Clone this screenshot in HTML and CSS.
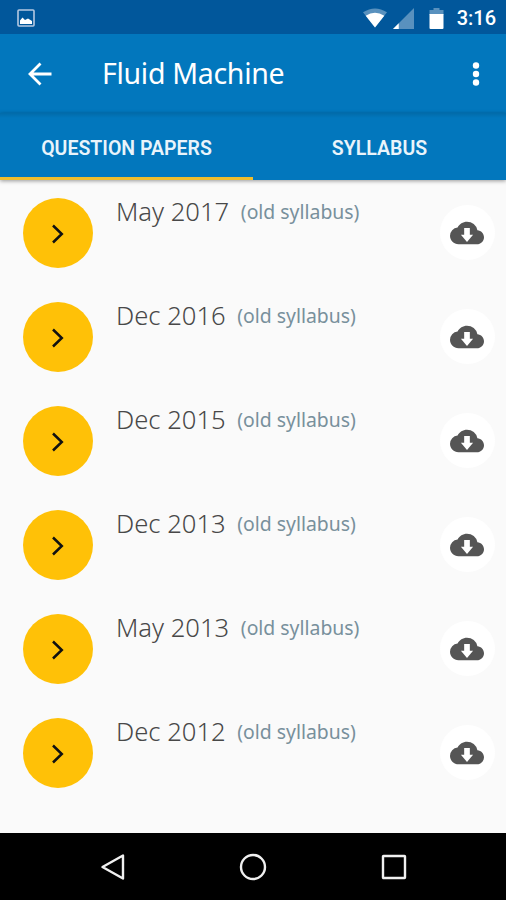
FILE: index.html
```html
<!DOCTYPE html>
<html lang="en">
<head>
    <meta charset="UTF-8">
    <meta name="viewport" content="width=device-width, initial-scale=1.0">
    <title>Fluid Machine</title>
    <link rel="stylesheet" href="styles.css">
</head>
<body>
    <!-- Shared icons -->
    <svg class="sprite" aria-hidden="true">
        <symbol id="chevron" viewBox="0 0 12 20">
            <path d="M1 1.500 9.800 10 1 18.500"/>
        </symbol>
        <symbol id="cloud" viewBox="0 0 24 24">
            <path d="M19.35 10.04A7.49 7.49 0 0 0 12 4C9.11 4 6.6 5.64 5.35 8.04A5.994 5.994 0 0 0 0 14c0 3.31 2.69 6 6 6h13c2.76 0 5-2.24 5-5 0-2.64-2.05-4.78-4.65-4.96zM16.3 13.3L12 18.3l-4.300-5H10V8.500h4V13.300z"/>
        </symbol>
    </svg>

    <div class="status-bar">
        <svg class="picture-icon" viewBox="0 0 18 18">
            <rect x="1" y="1" width="16" height="16" rx="1"/>
            <path d="M3 15V11.500l2.500-3L8 11l3-1.500 4 2.500v3z"/>
        </svg>
        <svg class="wifi-icon" viewBox="0 0 24 20">
            <path class="faded" d="M0 4.2Q12-3.4 24 4.2L12 19.5z"/>
            <path d="M2.7 7.7Q12 1.9 21.3 7.7L12 19.5z"/>
        </svg>
        <svg class="signal-icon" viewBox="0 0 22 22">
            <path class="faded" d="M0 22 22 0v22z"/>
            <path d="M0 22 6 16v6z"/>
        </svg>
        <svg class="battery-icon" viewBox="0 0 14 21">
            <path class="faded" d="M4 0h6v2h4v5H0V2h4z"/>
            <path d="M0 6h14v14a1 1 0 0 1-1 1H1a1 1 0 0 1-1-1z"/>
        </svg>
        <span class="clock">3:16</span>
    </div>

    <header class="toolbar">
        <svg class="back-icon" viewBox="0 0 24 24">
            <path d="M23.500 12H2.500M12.500 1.500 2 12l10.500 10.500"/>
        </svg>
        <h1>Fluid Machine</h1>
        <svg class="menu-icon" viewBox="0 0 8 24">
            <circle cx="4" cy="3.500" r="3.200"/>
            <circle cx="4" cy="12" r="3.200"/>
            <circle cx="4" cy="20.500" r="3.200"/>
        </svg>
    </header>

    <nav class="tabs">
        <a class="tab active">QUESTION PAPERS</a>
        <a class="tab">SYLLABUS</a>
    </nav>

    <ul class="papers">
        <li>
            <span class="go"><svg><use href="#chevron"/></svg></span>
            <p class="paper">May 2017 <small>(old syllabus)</small></p>
            <span class="download"><svg><use href="#cloud"/></svg></span>
        </li>
        <li>
            <span class="go"><svg><use href="#chevron"/></svg></span>
            <p class="paper">Dec 2016 <small>(old syllabus)</small></p>
            <span class="download"><svg><use href="#cloud"/></svg></span>
        </li>
        <li>
            <span class="go"><svg><use href="#chevron"/></svg></span>
            <p class="paper">Dec 2015 <small>(old syllabus)</small></p>
            <span class="download"><svg><use href="#cloud"/></svg></span>
        </li>
        <li>
            <span class="go"><svg><use href="#chevron"/></svg></span>
            <p class="paper">Dec 2013 <small>(old syllabus)</small></p>
            <span class="download"><svg><use href="#cloud"/></svg></span>
        </li>
        <li>
            <span class="go"><svg><use href="#chevron"/></svg></span>
            <p class="paper">May 2013 <small>(old syllabus)</small></p>
            <span class="download"><svg><use href="#cloud"/></svg></span>
        </li>
        <li>
            <span class="go"><svg><use href="#chevron"/></svg></span>
            <p class="paper">Dec 2012 <small>(old syllabus)</small></p>
            <span class="download"><svg><use href="#cloud"/></svg></span>
        </li>
    </ul>

    <footer class="nav-bar">
        <svg viewBox="0 0 28 28"><path d="M24 2.500v23L3.500 14z"/></svg>
        <svg viewBox="0 0 28 28"><circle cx="14" cy="14" r="12"/></svg>
        <svg viewBox="0 0 28 28"><rect x="3" y="3" width="22" height="22" rx="0.500"/></svg>
    </footer>
</body>
</html>
```
FILE: styles.css
```css
* {
    box-sizing: border-box;
}

body {
    margin: 0;
    height: 900px;
    display: flex;
    flex-direction: column;
    overflow: hidden;
    background: #fafafa;
    font-family: "Noto Sans", "Open Sans", sans-serif;
}

svg {
    display: block;
    flex: none;
}

.sprite {
    display: none;
}

/* Status bar */
.status-bar {
    height: 34px;
    padding: 2px 10px 0 17px;
    display: flex;
    align-items: center;
    background: #01579b;
    color: #fff;
    fill: #fff;
}

.faded {
    opacity: 0.35;
}

.picture-icon {
    width: 18px;
    height: 18px;
    margin-right: auto;
}

.picture-icon rect {
    fill: none;
    stroke: #b5c9e2;
    stroke-width: 1.6;
}

.wifi-icon {
    width: 24px;
    height: 20px;
    margin-right: 6px;
}

.signal-icon {
    width: 21px;
    height: 21px;
    margin-right: 15px;
}

.battery-icon {
    width: 15px;
    height: 21px;
    margin-right: 13px;
}

.clock {
    font: 500 20px/24px Roboto, sans-serif;
}

/* Toolbar */
.toolbar {
    height: 79px;
    padding: 0 26px 0 28px;
    display: flex;
    align-items: center;
    background: #0277bd;
    color: #fff;
    fill: #fff;
}

.back-icon {
    width: 24px;
    height: 24px;
    fill: none;
    stroke: #fff;
    stroke-width: 2.8;
}

.toolbar h1 {
    flex: 1;
    margin: 0 0 1px 50px;
    font-size: 28.5px;
    font-weight: 400;
    letter-spacing: -0.3px;
    line-height: 36px;
}

.menu-icon {
    width: 8px;
    height: 24px;
}

/* Tabs */
.tabs {
    height: 67px;
    display: flex;
    background: linear-gradient(#026ba9, #0277bd 5px);
    box-shadow: 0 1px 4px rgba(0, 0, 0, 0.4);
}

.tab {
    flex: 1;
    padding-top: 24px;
    color: #e9f4fb;
    font: 600 19.5px/24px Roboto, sans-serif;
    text-align: center;
}

.tab.active {
    border-bottom: 3px solid #efbd2c;
}

/* Question papers */
.papers {
    flex: 1;
    margin: 0;
    padding: 0.5px 0 0;
    list-style: none;
}

.papers li {
    height: 104px;
    padding: 0 11.5px 0 23px;
    display: flex;
    align-items: center;
}

.go,
.download {
    display: flex;
    align-items: center;
    justify-content: center;
    border-radius: 50%;
}

.go {
    width: 70px;
    height: 70px;
    background: #ffc107;
}

.go svg {
    width: 12px;
    height: 20px;
    margin-top: 2px;
    fill: none;
    stroke: #111;
    stroke-width: 2.5;
}

.download {
    width: 55px;
    height: 55px;
    background: #fff;
    fill: #555;
}

.download svg {
    width: 34px;
    height: 34px;
}

.paper {
    flex: 1;
    align-self: flex-start;
    margin: 14px 0 0 23px;
    color: #484848;
    font-size: 25.6px;
    font-weight: 300;
    line-height: 34px;
}

.paper small {
    margin-left: 5px;
    color: #78909c;
    font-size: 19.4px;
    font-weight: 400;
    vertical-align: 2px;
}

/* System navigation */
.nav-bar {
    height: 67px;
    display: flex;
    justify-content: center;
    align-items: center;
    gap: 112.5px;
    background: #000;
}

.nav-bar svg {
    width: 28px;
    height: 28px;
    fill: none;
    stroke: #f0f0f0;
    stroke-width: 2.4;
    stroke-linejoin: round;
}
```
